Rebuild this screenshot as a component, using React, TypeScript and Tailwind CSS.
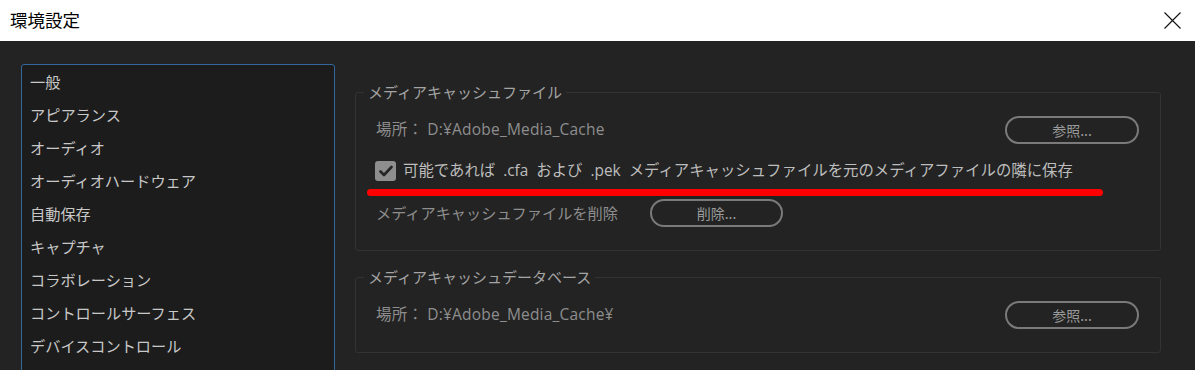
import React from "react";

const font = { fontFamily: '"Noto Sans CJK JP", "Noto Sans", sans-serif' };
const mixed = { fontFamily: '"Open Sans", "Noto Sans CJK JP", sans-serif' };

const items = [
  "一般",
  "アピアランス",
  "オーディオ",
  "オーディオハードウェア",
  "自動保存",
  "キャプチャ",
  "コラボレーション",
  "コントロールサーフェス",
  "デバイスコントロール",
];

function PillButton({ label, w }: { label: string; w: string }) {
  return (
    <div
      className={`${w} h-[28px] rounded-full border-2 border-[#7a7a7a] flex items-center justify-center text-[14px] text-[#9a9a9a] leading-none`}
    >
      {label}
    </div>
  );
}

export default function App() {
  return (
    <div className="w-[1195px] h-[370px] overflow-hidden bg-[#232323]" style={font}>
      <div className="h-[41px] bg-white flex items-center justify-between pl-[10px] pr-[14px]">
        <span className="text-[17.5px] text-black leading-none -mt-[2px]">環境設定</span>
        <svg width="17" height="17" viewBox="0 0 17 17" className="-mt-[1px]">
          <path d="M0.5 0.5 L16.5 16.5 M16.5 0.5 L0.5 16.5" stroke="#111" strokeWidth="1.1" />
        </svg>
      </div>
      <div className="flex pt-[23px] pl-[21px]">
        <div className="w-[314px] h-[320px] border border-[#35679b] rounded-t-[3px] bg-[#1c1c1c]">
          {items.map((t) => (
            <div key={t} className="h-[33px] flex items-center pl-[8px] text-[15.2px] text-[#c8c8c8]">
              {t}
            </div>
          ))}
        </div>
        <div className="ml-[20px] w-[806px]">
          <div className="relative mt-[28px] h-[159px] border border-[#333333] rounded-[3px]">
            <div className="absolute -top-[11px] left-[8px] px-[4px] bg-[#232323] text-[15px] leading-[20px] text-[#a4a4a4]">
              メディアキャッシュファイル
            </div>
            <div className="mt-[23px] h-[28px] flex items-center justify-between pl-[20px] pr-[21px]">
              <span className="text-[15.5px] tracking-[0.2px] text-[#8e8e8e] whitespace-pre" style={mixed}>場所： D:¥Adobe_Media_Cache</span>
              <PillButton label="参照..." w="w-[134px]" />
            </div>
            <div className="mt-[17px] h-[20px] flex items-center pl-[19px]">
              <div className="w-[21px] h-[20px] rounded-[3px] bg-[#8e8e8e] flex items-center justify-center">
                <svg width="14" height="12" viewBox="0 0 14 12">
                  <path d="M1.5 6.5 L5 10 L12.5 2" stroke="#262626" strokeWidth="2.6" fill="none" strokeLinecap="round" strokeLinejoin="round" />
                </svg>
              </div>
              <span className="ml-[7px] text-[15.4px] text-[#bdbdbd] whitespace-pre" style={mixed}>
                可能であれば  .cfa  および  .pek  メディアキャッシュファイルを元のメディアファイルの隣に保存
              </span>
            </div>
            <div className="mt-[8px] ml-[11px] w-[736px] h-[7px] rounded-full bg-[#ff0000]" />
            <div className="mt-[3px] h-[28px] flex items-center pl-[20px]">
              <span className="w-[274px] text-[15.2px] text-[#8e8e8e] -mt-[2px]">メディアキャッシュファイルを削除</span>
              <PillButton label="削除..." w="w-[133px]" />
            </div>
          </div>
          <div className="relative mt-[26px] h-[76px] border border-[#333333] rounded-[3px]">
            <div className="absolute -top-[11px] left-[8px] px-[4px] bg-[#232323] text-[15px] leading-[20px] text-[#a4a4a4]">
              メディアキャッシュデータベース
            </div>
            <div className="mt-[23px] h-[28px] flex items-center justify-between pl-[20px] pr-[21px]">
              <span className="text-[15.5px] tracking-[0.2px] text-[#8e8e8e] whitespace-pre" style={mixed}>場所： D:¥Adobe_Media_Cache¥</span>
              <PillButton label="参照..." w="w-[134px]" />
            </div>
          </div>
        </div>
      </div>
    </div>
  );
}
